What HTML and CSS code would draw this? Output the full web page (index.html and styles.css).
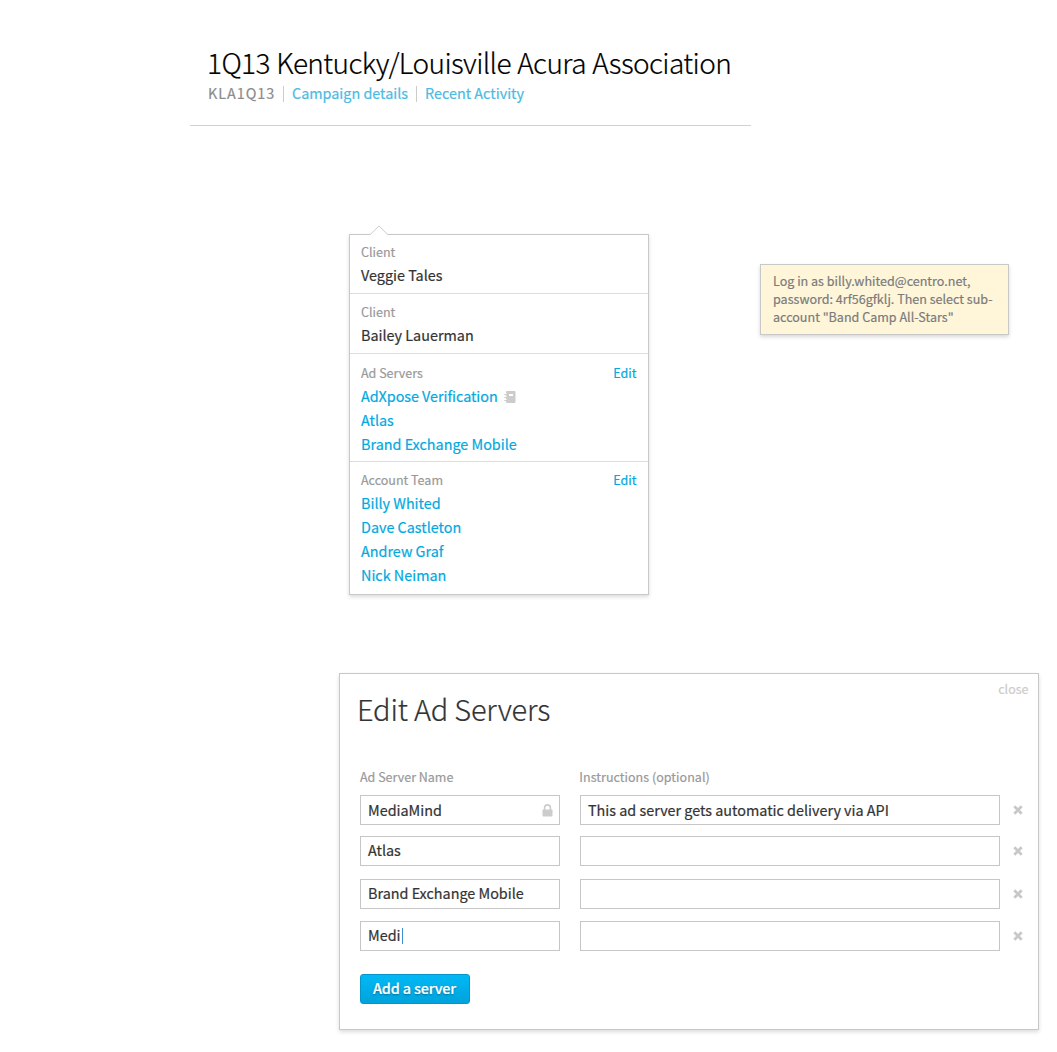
FILE: index.html
```html
<!DOCTYPE html>
<html lang="en">
<head>
<meta charset="utf-8">
<title>1Q13 Kentucky/Louisville Acura Association</title>
<link rel="stylesheet" href="styles.css">
</head>
<body>
<svg class="sprite" width="0" height="0" aria-hidden="true">
  <symbol id="remove" viewBox="0 0 10 10"><path d="M1.3 1.3L8.7 8.7M8.7 1.3L1.3 8.7" stroke="currentColor" stroke-width="2.7"/></symbol>
</svg>

<header class="campaign">
  <h1 class="campaign-title">1Q13 Kentucky/Louisville Acura Association</h1>
  <nav class="campaign-meta">
    <span class="campaign-code">KLA1Q13</span>
    <span class="divider"></span>
    <a class="campaign-link">Campaign details</a>
    <span class="divider"></span>
    <a class="campaign-link">Recent Activity</a>
  </nav>
</header>

<main class="middle">
  <section class="popover">
    <svg class="popover-arrow" width="20" height="11" viewBox="0 0 20 11"><path d="M1 10L10 1L19 10V11H1Z" fill="#fff"/><path d="M1 9.8L10 .9L19 9.8" fill="none" stroke="#ccc"/></svg>
    <div class="group">
      <div class="group-head"><span>Client</span></div>
      <p class="value">Veggie Tales</p>
    </div>
    <div class="group group-client">
      <div class="group-head"><span>Client</span></div>
      <p class="value">Bailey Lauerman</p>
    </div>
    <div class="group group-servers">
      <div class="group-head"><span>Ad Servers</span><a class="edit">Edit</a></div>
      <a class="value link"><span class="server-name">AdXpose Verification</span><svg class="notebook" width="12" height="12" viewBox="0 0 12 12"><path fill="#ccc" fill-rule="evenodd" d="M3 0H10.5Q11.5 0 11.5 1V11Q11.5 12 10.5 12H3Q2 12 2 11V10H.3V9H2.6V8H2V7H.3V6H2.6V5H2V4H.3V3H2.6V2H2V1Q2 0 3 0ZM5 3V5H9V3Z"/></svg></a>
      <a class="value link">Atlas</a>
      <a class="value link">Brand Exchange Mobile</a>
    </div>
    <div class="group group-team">
      <div class="group-head"><span>Account Team</span><a class="edit">Edit</a></div>
      <a class="value link">Billy Whited</a>
      <a class="value link">Dave Castleton</a>
      <a class="value link">Andrew Graf</a>
      <a class="value link">Nick Neiman</a>
    </div>
  </section>

  <aside class="note">Log in as billy.whited@centro.net,<br>password: 4rf56gfklj. Then select sub-<br>account "Band Camp All-Stars"</aside>
</main>

<section class="dialog">
  <a class="close">close</a>
  <h2 class="dialog-title">Edit Ad Servers</h2>
  <div class="row row-labels"><span>Ad Server Name</span><span class="label-instructions">Instructions (optional)</span></div>
  <div class="row row-1">
    <div class="field">MediaMind<svg class="lock" width="11" height="13" viewBox="0 0 11 13"><path d="M2.6 6V3.8a2.9 2.9 0 0 1 5.8 0V6" fill="none" stroke="#ccc" stroke-width="1.6"/><rect x=".5" y="5.5" width="10" height="7" rx=".8" fill="#ccc"/></svg></div>
    <div class="field">This ad server gets automatic delivery via API</div>
    <svg class="remove"><use href="#remove"/></svg>
  </div>
  <div class="row row-2">
    <div class="field">Atlas</div>
    <div class="field"></div>
    <svg class="remove"><use href="#remove"/></svg>
  </div>
  <div class="row row-3">
    <div class="field">Brand Exchange Mobile</div>
    <div class="field"></div>
    <svg class="remove"><use href="#remove"/></svg>
  </div>
  <div class="row row-4">
    <div class="field">Medi<span class="caret"></span></div>
    <div class="field"></div>
    <svg class="remove"><use href="#remove"/></svg>
  </div>
  <button class="add" type="button">Add a server</button>
</section>
</body>
</html>
```

FILE: styles.css
```css
* { box-sizing: border-box; }

body {
  margin: 0;
  height: 1052px;
  overflow: hidden;
  background: #fff;
  color: #333;
  font: 14.38px/24px "Noto Sans CJK SC", "Noto Sans", sans-serif;
  -webkit-text-stroke-width: .2px;
}

h1, h2, p { margin: 0; font-weight: 300; }

.sprite { display: block; }

/* Campaign header */
.campaign {
  width: 561px;
  height: 126px;
  margin-left: 190px;
  padding: 46px 0 0 17px;
  border-bottom: 1px solid #d2d2d2;
}

.campaign-title {
  color: #000;
  font-size: 28px;
  letter-spacing: -.6px;
  word-spacing: .7px;
  line-height: 32px;
  white-space: nowrap;
}

.campaign-meta {
  display: flex;
  align-items: center;
  height: 20px;
  margin-top: 5px;
  padding-left: 1px;
  line-height: 20px;
}

.campaign-code { width: 75px; color: #8c8c8c; letter-spacing: .95px; }
.campaign-link { color: #4bbbe3; }
.divider { width: 1px; height: 16px; margin: 2px 8px 0 0; background: #ccc; }
.campaign-link + .divider { margin-left: 8px; }

/* Middle area: details popover and note */
.middle {
  display: flex;
  align-items: flex-start;
  gap: 111px;
  padding: 108px 0 0 349px;
}

.popover {
  position: relative;
  width: 300px;
  height: 361px;
  border: 1px solid #c8c8c8;
  background: #fff;
  box-shadow: 0 2px 4px rgba(0, 0, 0, .14);
}

.popover-arrow { position: absolute; left: 19px; top: -10px; }

.group { padding: 8px 11px 6px; border-bottom: 1px solid #ddd; }
.group-client { padding-top: 9px; }
.group-servers { padding-top: 10px; padding-bottom: 5px; }
.group-team { padding-top: 9px; border-bottom: 0; }

.group-head {
  display: flex;
  justify-content: space-between;
  height: 20px;
  color: #999;
  font-size: 12.5px;
  line-height: 18px;
}

.edit { margin-right: .6px; color: #00a9e0; }

.value {
  display: flex;
  align-items: center;
  height: 24px;
  font-weight: 400;
}

.link { color: #00a9e0; }
.server-name { letter-spacing: -.04px; }
.notebook { margin: 1px 0 0 6px; }

.note {
  width: 249px;
  height: 71px;
  margin-top: 30px;
  padding: 7px 0 0 12px;
  border: 1px solid #c8c8c8;
  background: #fff6da;
  box-shadow: 0 2px 4px rgba(0, 0, 0, .16);
  color: #7b7b7b;
  font-size: 12.55px;
  line-height: 18px;
  white-space: nowrap;
}

/* Ad server dialog */
.dialog {
  display: flex;
  flex-direction: column;
  align-items: flex-start;
  width: 700px;
  height: 357px;
  margin: 78px 0 0 339px;
  padding: 6px 0 0 20px;
  border: 1px solid #c8c8c8;
  background: #fff;
  box-shadow: 0 2px 4px rgba(0, 0, 0, .14);
}

.close {
  align-self: flex-end;
  margin-right: 9.5px;
  color: #ccc;
  font-size: 12.5px;
  line-height: 18px;
}

.dialog-title {
  margin: -8px 0 0 -3px;
  font-size: 29px;
  letter-spacing: -.2px;
  line-height: 36px;
}

.row {
  display: grid;
  grid-template-columns: 200px 420px 10px;
  column-gap: 20px;
  align-items: center;
}

.row-labels {
  margin: 42px 0 9px;
  color: #999;
  font-size: 12.5px;
  line-height: 18px;
}

.label-instructions { margin-left: -.7px; letter-spacing: .03px; }

.row-2 { margin-top: 11px; }
.row-3 { margin-top: 13px; }
.row-4 { margin-top: 12px; }

.field {
  display: flex;
  align-items: center;
  height: 30px;
  padding: 0 6px 2px 7px;
  border: 1px solid #c6c6c6;
  background: #fff;
}

.row-1 .field { padding-bottom: 0; }

.lock { margin: 0 0 0 auto; }
.caret { width: 1.5px; height: 16px; margin: 2px 0 0 1px; background: #3c8fd0; }
.remove { width: 10px; height: 10px; margin-left: -7px; color: #c8c8c8; }

.add {
  width: 110px;
  height: 30px;
  margin-top: 23px;
  padding: 0 1px 3px 0;
  border: 1px solid #0595c8;
  border-radius: 3px;
  background: linear-gradient(#00b9f6, #00a3dc);
  color: #fff;
  font: 500 14.4px/24px "Noto Sans CJK SC", "Noto Sans", sans-serif;
  letter-spacing: -.14px;
  text-shadow: 0 1px 2px rgba(0, 0, 0, .35);
}
```
